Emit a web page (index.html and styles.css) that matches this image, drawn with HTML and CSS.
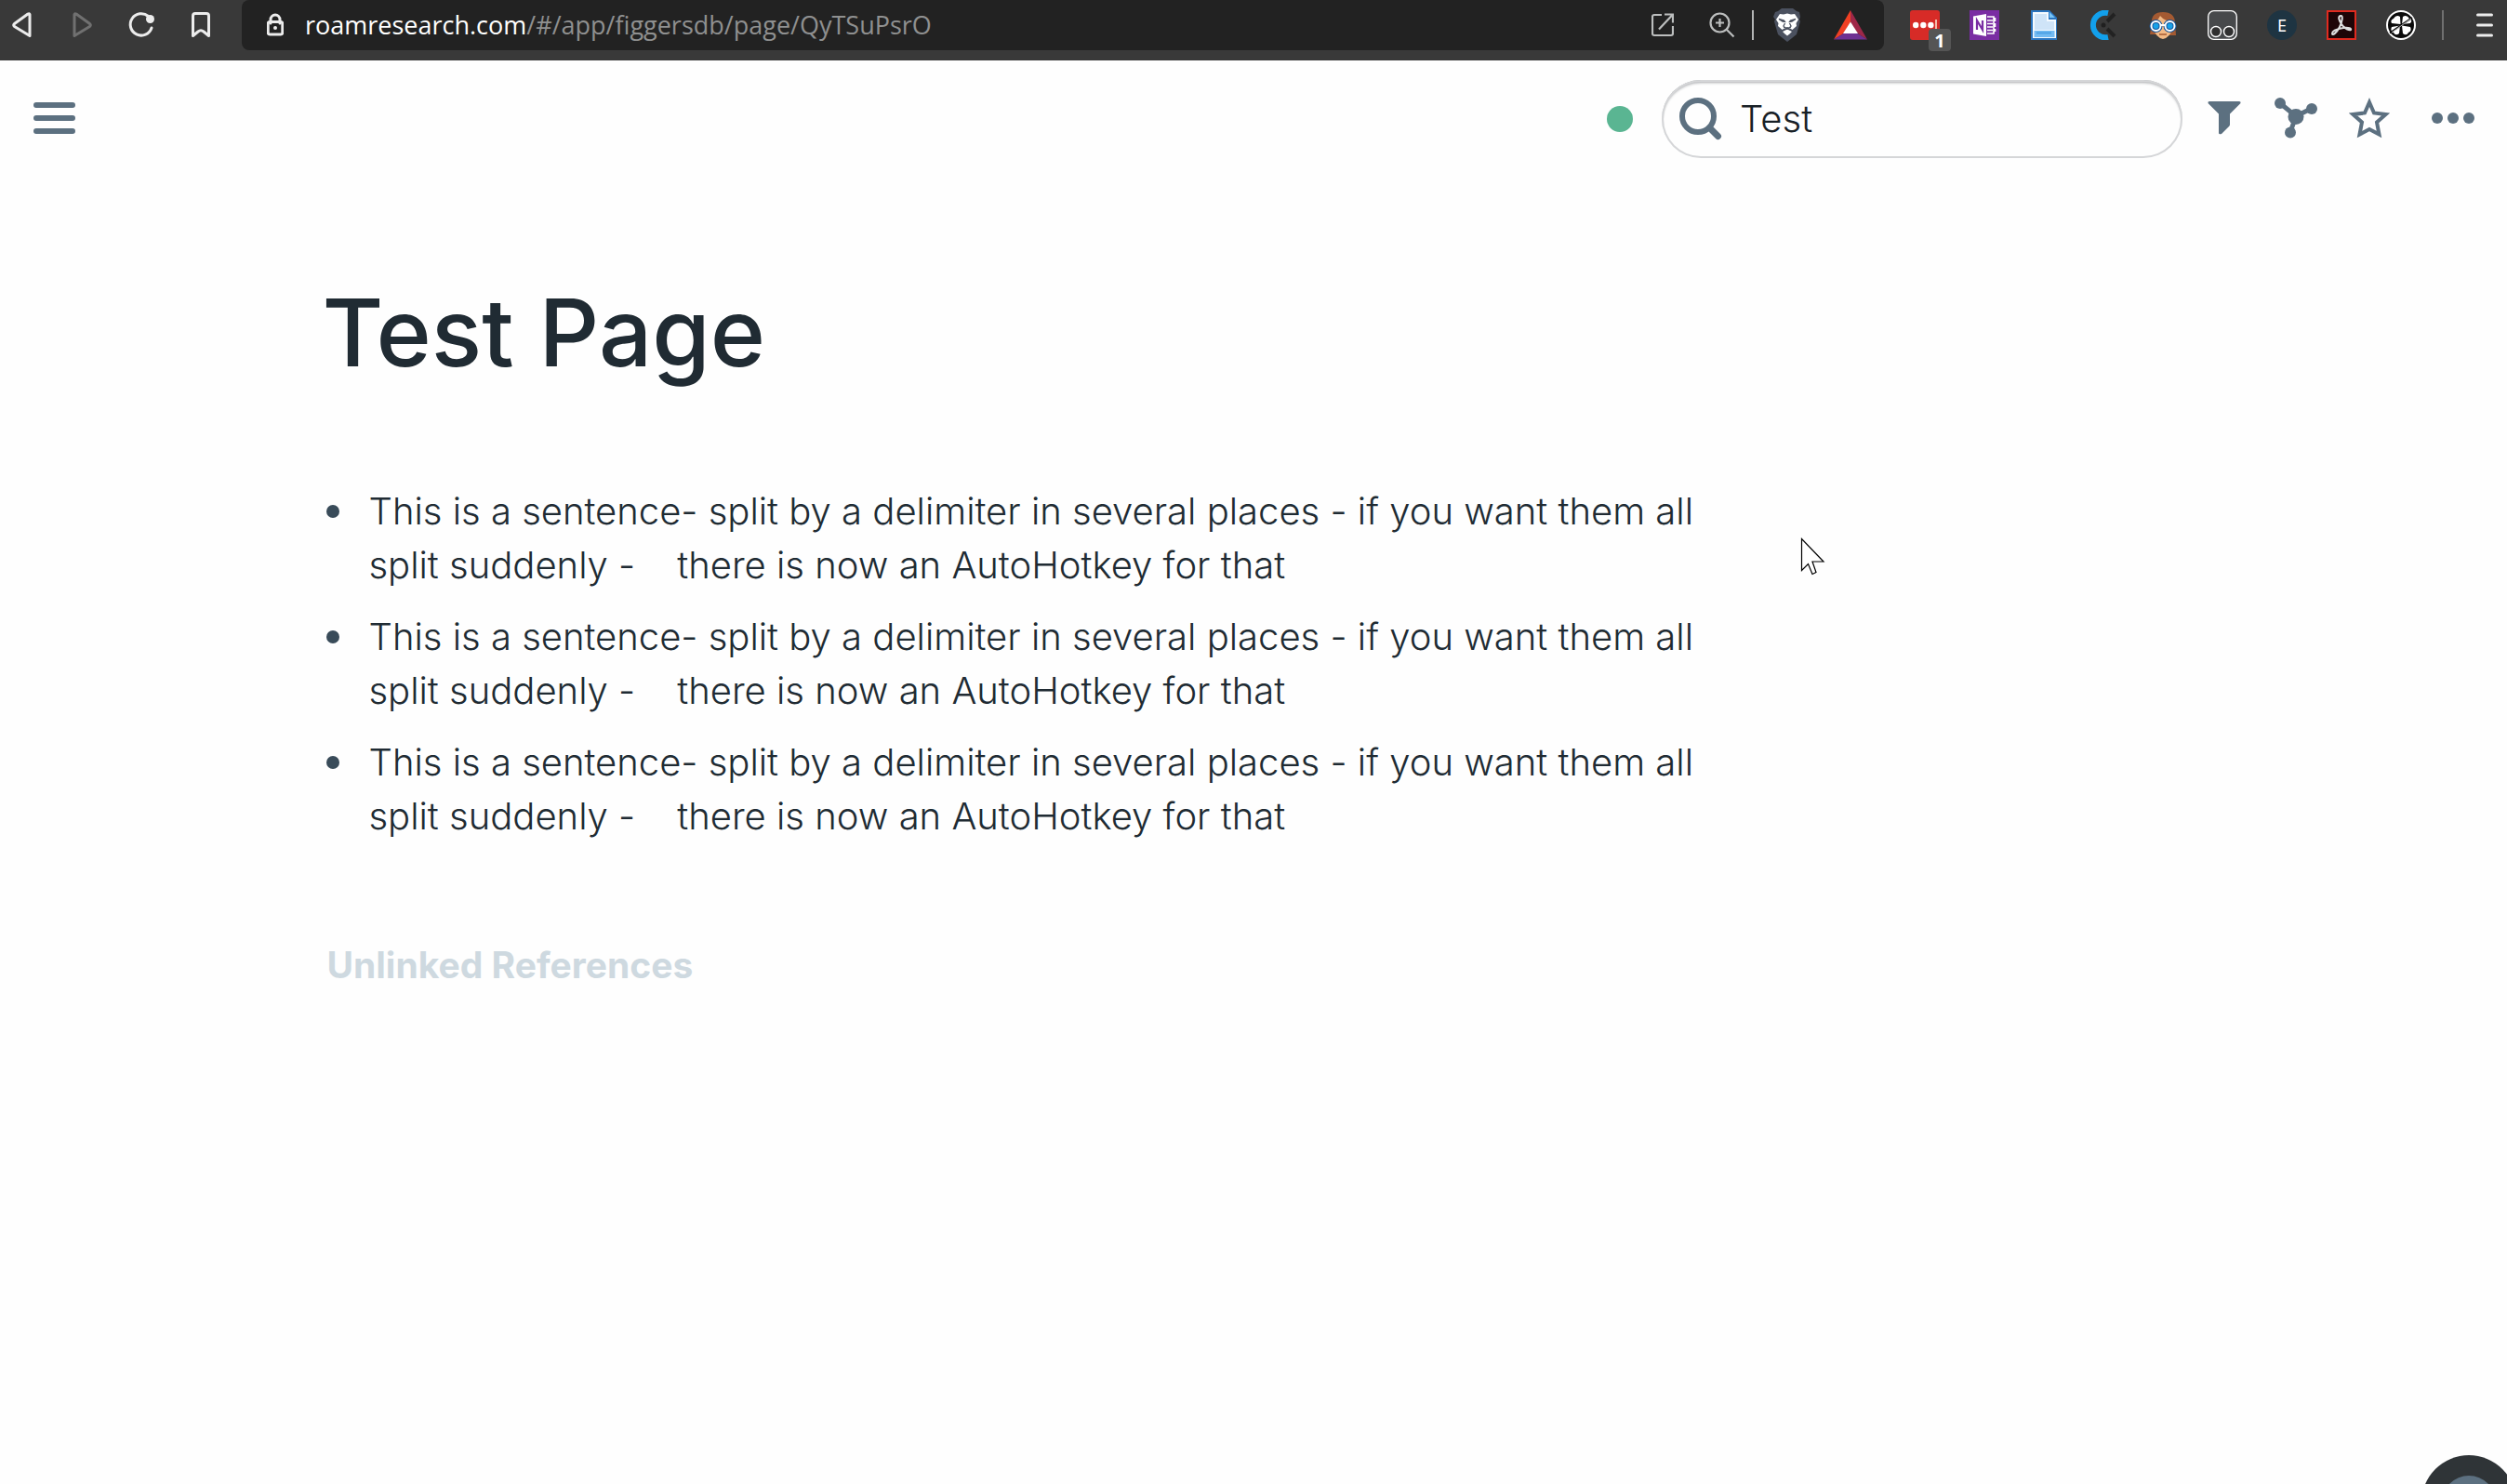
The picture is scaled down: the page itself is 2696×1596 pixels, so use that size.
FILE: index.html
```html
<!DOCTYPE html>
<html lang="en">
<head>
<meta charset="utf-8">
<title>Test Page</title>
<link rel="stylesheet" href="styles.css">
</head>
<body>
<nav class="browser" aria-label="Browser">
  <div class="browser-nav">
    <button class="nav-btn" aria-label="Back"><svg width="24" height="30" viewBox="0 0 24 30"><path d="M20 3.500v23L3.500 16.500q-1.500-1.500 0-3L18 3q2-1 2 1z" class="line"/></svg></button>
    <button class="nav-btn dim" aria-label="Forward"><svg width="24" height="30" viewBox="0 0 24 30"><path d="M4 3.500v23L20.500 16.500q1.500-1.500 0-3L6 3q-2-1-2 1z" class="line"/></svg></button>
    <button class="nav-btn" aria-label="Reload"><svg width="30" height="30" viewBox="0 0 30 30"><path d="M22.500 5.500A11.700 11.700 0 1 0 26 18" class="line"/><circle cx="24.500" cy="8.500" r="4.500" fill="currentColor"/></svg></button>
    <button class="nav-btn" aria-label="Bookmark"><svg width="24" height="30" viewBox="0 0 24 30"><path d="M3.500 5q0-2.500 2.500-2.500h12q2.500 0 2.500 2.500v21.500L15 22q-3-2.500-6 0l-5.500 4.500z" class="line"/></svg></button>
  </div>
  <div class="omnibox">
    <svg class="lock" width="18" height="26" viewBox="0 0 18 26"><path d="M4 11V7a5 5 0 0 1 10 0v4" class="line"/><rect x="1.200" y="9.500" width="15.600" height="13.500" rx="2" class="line"/><circle cx="9" cy="16" r="2" fill="#eee"/></svg>
    <div class="url"><span class="host">roamresearch.com</span>/#/app/figgersdb/page/QyTSuPsrO</div>
    <div class="omni-actions">
      <button class="omni-btn soft" aria-label="Open externally"><svg width="24" height="26" viewBox="0 0 24 26"><path d="M11 2H3q-2 0-2 2v18q0 2 2 2h18q2 0 2-2v-8M14 1.500h9v9M23 1.500L8 17.500" fill="none" stroke="currentColor" stroke-width="2.200"/></svg></button>
      <button class="omni-btn soft" aria-label="Zoom"><svg width="28" height="28" viewBox="0 0 28 28"><circle cx="11.500" cy="11.500" r="10" fill="none" stroke="currentColor" stroke-width="2.200"/><path d="M11.500 7v9M7 11.500h9M18.500 18.500l8 8" fill="none" stroke="currentColor" stroke-width="2.200"/></svg></button>
      <span class="omni-rule"></span>
      <button class="shield" aria-label="Shields"><svg width="32" height="36" viewBox="0 0 32 36"><path d="M10 0h12l4 3 3 1 1 5-1 3 1 2-4 14-10 8-10-8L2 14l1-2-2-3 2-5 3-1z" fill="#4b515f"/><path d="M8 6l4 .5L16 5.500l4 1L24 6l4 6-2.500 4 .5 3-4.500 4-2.500-1.500-3-1-3 1L10.500 23 6 19l.5-3L4 12z" fill="#fff"/><path d="M11 25l5-2.500 5 2.500-2.500 2.500L16 29.500l-2.500-2z" fill="#fff"/><path d="M7 11.500l5.500 1.500 1 1.500-2.500-.3zM25 11.500l-5.500 1.500-1 1.500 2.500-.3zM13 21l-1-2 1.500-3M19 21l1-2-1.500-3M13 20l3 2 3-2M16 20v3" fill="none" stroke="#4b515f" stroke-width="1.300"/></svg></button>
      <button class="rewards" aria-label="Rewards"><svg width="36" height="32" viewBox="0 0 36 32"><path d="M18 0v13L10.500 25 0 31.500z" fill="#f04023"/><path d="M18 0l18 31.500L25.500 25 18 13z" fill="#9e2848"/><path d="M0 31.500L10.500 25h15L36 31.500z" fill="#6e3192"/><path d="M18 12.500l8 12.500H10z" fill="#fff"/></svg></button>
    </div>
  </div>
  <div class="extensions">
    <button class="ext" aria-label="Passwords"><svg width="32" height="32" viewBox="0 0 32 32"><rect width="32" height="32" rx="3" fill="#d72b27"/><circle cx="6.200" cy="16" r="3.200" fill="#fff"/><circle cx="14.300" cy="16" r="3.200" fill="#fff"/><circle cx="22.400" cy="16" r="3.200" fill="#fff"/><path d="M28 10v12" stroke="#f3b9a8" stroke-width="2"/></svg><span class="count">1</span></button>
    <button class="ext" aria-label="OneNote"><svg width="32" height="32" viewBox="0 0 32 32"><path d="M0 0h32v32H0z" fill="#7a2da3"/><path d="M4 6.500L18 4v24L4 25.500z" fill="#fff"/><path d="M8 21V11l6 10V11" fill="none" stroke="#7a2da3" stroke-width="2.200"/><path d="M19 7h7v18h-7M19 11h6M19 14.500h6M19 18h6M19 21.500h6M27.500 8v4M27.500 14v4M27.500 20v3" fill="none" stroke="#fff" stroke-width="1.600"/></svg></button>
    <button class="ext" aria-label="Document"><svg width="32" height="32" viewBox="0 0 32 32"><path d="M2 0h20l8 8v24H2z" fill="#2a75c0"/><path d="M4 2h17v8h8v20H4z" fill="#f4faff"/><path d="M6 4h13v8h8v9H6z" fill="#cfe4f8"/><path d="M22 2l6 6h-6z" fill="#78c4f5"/><path d="M5.500 22h22v7h-22z" fill="#73bbf3"/><path d="M8 24.500h16" stroke="#4da1e4" stroke-width="2"/></svg></button>
    <button class="ext" aria-label="Clockify"><svg width="32" height="32" viewBox="0 0 32 32"><path d="M21 3A13.300 13.300 0 1 0 21 29" fill="none" stroke="#12a0ec" stroke-width="6"/><path d="M20 12l8-8M20 20l8 8" stroke="#222" stroke-width="4"/><circle cx="16" cy="16" r="2.500" fill="#202020"/></svg></button>
    <button class="ext" aria-label="Reader"><svg width="32" height="32" viewBox="0 0 32 32"><path d="M4 14Q3 2 16 2t13 12l1 13h-6L8 26H2z" fill="#a45a32"/><path d="M6 13q4-1 7-7 5 6 13 6v8q-2 9-10 11-8-2-10-11z" fill="#f2b985"/><path d="M12 26h8" stroke="#a45a32" stroke-width="1.500"/><circle cx="8.500" cy="17" r="5" fill="#18a1e8" stroke="#15549a" stroke-width="4"/><circle cx="23.500" cy="17" r="5" fill="#18a1e8" stroke="#15549a" stroke-width="4"/><circle cx="8.500" cy="17" r="5" fill="none" stroke="#fff" stroke-width="2"/><circle cx="23.500" cy="17" r="5" fill="none" stroke="#fff" stroke-width="2"/><path d="M13.500 16h5" stroke="#fff" stroke-width="2"/></svg></button>
    <button class="ext" aria-label="Scripts"><svg width="32" height="32" viewBox="0 0 32 32"><rect x=".7" y=".7" width="30.600" height="30.600" rx="6" fill="#47494b" stroke="#fff" stroke-width="1.300"/><circle cx="9" cy="23" r="5.500" fill="#303030" stroke="#fff" stroke-width="1.400"/><circle cx="23" cy="23" r="5.500" fill="#303030" stroke="#fff" stroke-width="1.400"/></svg></button>
    <button class="ext profile" aria-label="Profile E">E</button>
    <button class="ext" aria-label="Acrobat"><svg width="32" height="32" viewBox="0 0 32 32"><path d="M1 1h30v30H1z" fill="#1e0507" stroke="#e02a1f" stroke-width="2"/><path d="M15 6c3-1 2 6-1 12S6 28 6 25s6-5 12-6 9 1 8 2-7-1-10-6-4-8-1-9z" fill="none" stroke="#ddd" stroke-width="2"/></svg></button>
    <button class="ext" aria-label="Clover"><svg width="32" height="32" viewBox="0 0 32 32"><circle cx="16" cy="16" r="15" fill="#0b0b0b" stroke="#fff" stroke-width="2"/><path d="M15.500 15L6 14q-2-3 2-5 3-5 7-2zM17 15l9-1q3-3-1-5-3-5-7-2zM15 16.500L14 25q-4 3-6-1-4-2-2-6zM17 16.500l1 8.500q4 3 6-1 4-2 2-6z" fill="#fff"/><path d="M4 24.500L28 8" stroke="#0b0b0b" stroke-width="2"/><path d="M6 24L27 9" stroke="#fff" stroke-width=".7"/></svg></button>
  </div>
  <span class="bar-rule"></span>
  <button class="bar-menu" aria-label="Browser menu"><svg width="18" height="26" viewBox="0 0 18 26"><path d="M1.500 2h15M1.500 13h15M1.500 24h15" class="line"/></svg></button>
</nav>

<header class="topbar">
  <button class="tool" aria-label="Open sidebar"><svg width="45" height="34" viewBox="0 0 45 34"><path d="M3 3h39M3 17h39M3 31h39" stroke="currentColor" stroke-width="6" stroke-linecap="round"/></svg></button>
  <span class="status" role="img" aria-label="Synced"></span>
  <div class="search">
    <label for="find"><svg width="46" height="46" viewBox="0 0 46 46"><circle cx="20" cy="20" r="17" fill="none" stroke="currentColor" stroke-width="6"/><path d="M32.500 32.500l9 9" stroke="currentColor" stroke-width="7" stroke-linecap="round"/></svg></label>
    <input id="find" type="text" value="Test" aria-label="Find or create page">
  </div>
  <div class="tools">
    <button class="tool" aria-label="Filter"><svg width="36" height="36" viewBox="0 0 36 36"><path d="M2 0h32q2 0 1.500 2L24 13.500V25q0 1-1 2l-8 8q-3 1-3-1V13.500L.5 2Q0 0 2 0z" fill="currentColor"/></svg></button>
    <button class="tool" aria-label="Graph"><svg width="46" height="44" viewBox="0 0 46 44"><path d="M6 6l17 14 16-8M23 20l-6 17" fill="none" stroke="currentColor" stroke-width="5"/><circle cx="6" cy="6" r="6" fill="currentColor"/><circle cx="40" cy="12" r="6" fill="currentColor"/><circle cx="17" cy="37.500" r="6" fill="currentColor"/><circle cx="23" cy="20.500" r="8.500" fill="currentColor"/></svg></button>
    <button class="tool" aria-label="Add shortcut"><svg width="44" height="44" viewBox="0 0 44 44"><path d="M22 5l5 11.500 12.500 1.500-9.500 8.500 2.500 13L22 34l-10.500 5.500 2.500-13L4.500 18 17 16.500z" fill="none" stroke="currentColor" stroke-width="4"/></svg></button>
    <button class="tool more" aria-label="More"><svg width="46" height="12" viewBox="0 0 46 12"><circle cx="6" cy="6" r="6" fill="currentColor"/><circle cx="23" cy="6" r="6" fill="currentColor"/><circle cx="40" cy="6" r="6" fill="currentColor"/></svg></button>
  </div>
</header>

<main class="article">
  <h1>Test Page</h1>
  <ul class="blocks">
    <li>This is a sentence- split by a delimiter in several places - if you want them all split suddenly -    there is now an AutoHotkey for that</li>
    <li>This is a sentence- split by a delimiter in several places - if you want them all split suddenly -    there is now an AutoHotkey for that</li>
    <li>This is a sentence- split by a delimiter in several places - if you want them all split suddenly -    there is now an AutoHotkey for that</li>
  </ul>
  <h2>Unlinked References</h2>
</main>

<button class="help" aria-label="Help"><span></span></button>
<svg class="pointer" width="28" height="42" viewBox="0 0 28 42"><path d="M1.500 1.500v34l7-7 4.500 11 4-2-4-11.500h12z" fill="#fff" stroke="#000" stroke-width="1.200"/></svg>
</body>
</html>
```
FILE: styles.css
```css
* { box-sizing: border-box; }

body {
  margin: 0;
  background: #fefefe;
  color: #202b33;
  font-family: Inter, "Liberation Sans", sans-serif;
  font-size: 40px;
}

button {
  display: flex;
  align-items: center;
  justify-content: center;
  padding: 0;
  border: 0;
  background: none;
  color: inherit;
  font: inherit;
  flex: none;
}

svg { display: block; flex: none; }

.line {
  fill: none;
  stroke: currentColor;
  stroke-width: 3;
  stroke-linecap: round;
  stroke-linejoin: round;
}

/* Browser bar */
.browser {
  display: flex;
  align-items: center;
  padding: 0 15px 11px 4px;
  background: #393939;
  color: #ececec;
}

.browser-nav { display: flex; gap: 24px; margin-right: 24px; }
.nav-btn { width: 40px; height: 40px; }
.nav-btn.dim { color: #707070; }

.omnibox {
  display: flex;
  flex: 1;
  align-items: center;
  height: 54px;
  padding: 0 18px 0 27px;
  border-radius: 8px;
  background: #222;
}

.url {
  flex: 1;
  margin-left: 23px;
  color: #8f9090;
  font-family: "Open Sans", "Noto Sans", sans-serif;
  font-size: 27px;
  line-height: 40px;
  white-space: nowrap;
}
.host { color: #fff; }

.omni-actions { display: flex; align-items: center; }
.omni-btn { width: 28px; margin-right: 36px; }
.omni-btn.soft { color: #bcbebe; }
.omni-btn + .omni-btn { margin-right: 18px; }
.omni-rule { width: 2px; height: 32px; background: #b3b5b5; }
.shield { margin-left: 20px; }
.rewards { margin-left: 34px; }

.extensions { display: flex; gap: 32px; margin: 0 28px; }
.ext { position: relative; width: 32px; height: 32px; }
.count {
  position: absolute;
  left: 20px;
  top: 20px;
  width: 24px;
  height: 24px;
  border-radius: 4px;
  background: #555;
  color: #fff;
  font: 700 20px/26px "Open Sans", sans-serif;
}
.profile {
  border-radius: 50%;
  background: #1e3442;
  color: #fff;
  font: 400 18px/32px "Noto Sans", sans-serif;
}
.bar-rule { width: 2px; height: 32px; background: #707070; }
.bar-menu { margin-left: 35px; }

/* Page toolbar */
.topbar {
  display: flex;
  align-items: center;
  padding: 21px 35px 21px 36px;
  color: #5c7080;
}
.tool { height: 46px; padding-bottom: 2px; }
.status {
  width: 28px;
  height: 28px;
  margin-left: auto;
  margin-right: 31px;
  border-radius: 50%;
  background: #5ab592;
}
.search {
  display: flex;
  align-items: center;
  width: 560px;
  height: 84px;
  padding: 0 20px 0 19px;
  border-radius: 42px;
  background: #fefefe;
  box-shadow: inset 0 0 0 2px #d5d6d8, inset 0 3px 3px #a9abae;
}
.search input {
  flex: 1;
  min-width: 0;
  margin-left: 19px;
  padding: 0;
  border: 0;
  outline: 0;
  background: none;
  color: #182026;
  font: 300 40px/58px Inter, sans-serif;
}
.tools { display: flex; align-items: center; gap: 34px; margin-left: 27px; }
.tools .tool:first-child { margin-right: 2px; }
.more { margin-left: 11px; }

/* Page content */
.article {
  width: 1500px;
  max-width: 80%;
  margin-left: calc(13% - 4px);
}
h1 {
  margin: 103px 0 101px;
  font-size: 101px;
  font-weight: 500;
  line-height: 126px;
}
.blocks {
  display: flex;
  flex-direction: column;
  gap: 19px;
  margin: 0;
  padding: 0 0 0 5px;
  list-style: none;
  font-weight: 300;
  line-height: 58px;
}
.blocks li {
  display: grid;
  grid-template-columns: 14px 1fr;
  column-gap: 31px;
  white-space: pre-wrap;
}
.blocks li::before {
  content: "";
  width: 14px;
  height: 14px;
  margin-top: 22px;
  border-radius: 50%;
  background: #394b59;
}
h2 {
  margin: 102px 0 0;
  padding-left: 5px;
  color: #ced9e0;
  font-size: 39px;
  font-weight: 700;
  line-height: 58px;
}

/* Overlays */
.help {
  position: fixed;
  right: -10px;
  bottom: -71px;
  width: 102px;
  height: 102px;
  border-radius: 50%;
  background: #2f3437;
}
.help span {
  width: 58px;
  height: 58px;
  border-radius: 50%;
  background: #5c7080;
}
.pointer { position: absolute; left: 1936px; top: 578px; }
```
